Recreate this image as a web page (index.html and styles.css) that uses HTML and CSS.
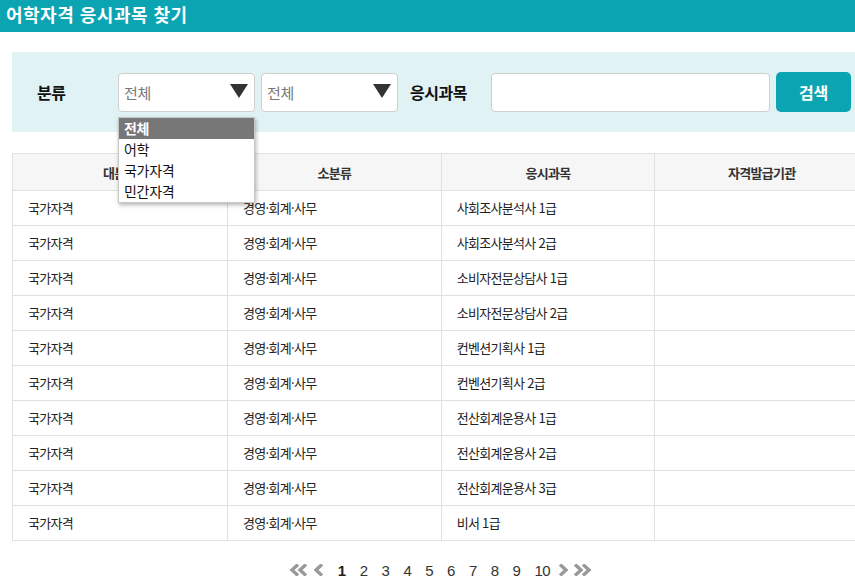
FILE: index.html
```html
<!DOCTYPE html>
<html lang="ko">
<head>
<meta charset="utf-8">
<title>어학자격 응시과목 찾기</title>
<link rel="stylesheet" href="styles.css">
</head>
<body>
<h1 class="title">어학자격 응시과목 찾기</h1>
<div class="content">
  <div class="search">
    <span class="label">분류</span>
    <div class="select-wrap">
      <div class="select"><span>전체</span><svg class="caret" width="18" height="14" viewBox="0 0 18 14"><path d="M0 0 H18 L9 14 Z" fill="#333"/></svg></div>
      <ul class="menu">
        <li class="on">전체</li>
        <li>어학</li>
        <li>국가자격</li>
        <li>민간자격</li>
      </ul>
    </div>
    <div class="select-wrap">
      <div class="select"><span>전체</span><svg class="caret" width="18" height="14" viewBox="0 0 18 14"><path d="M0 0 H18 L9 14 Z" fill="#333"/></svg></div>
    </div>
    <span class="label label2">응시과목</span>
    <div class="input"></div>
    <button class="btn">검색</button>
  </div>

  <table class="list">
    <colgroup><col class="c1"><col><col><col></colgroup>
    <thead>
      <tr><th>대분류</th><th>소분류</th><th>응시과목</th><th>자격발급기관</th></tr>
    </thead>
    <tbody>
      <tr><td>국가자격</td><td>경영·회계·사무</td><td>사회조사분석사 1급</td><td></td></tr>
      <tr><td>국가자격</td><td>경영·회계·사무</td><td>사회조사분석사 2급</td><td></td></tr>
      <tr><td>국가자격</td><td>경영·회계·사무</td><td>소비자전문상담사 1급</td><td></td></tr>
      <tr><td>국가자격</td><td>경영·회계·사무</td><td>소비자전문상담사 2급</td><td></td></tr>
      <tr><td>국가자격</td><td>경영·회계·사무</td><td>컨벤션기획사 1급</td><td></td></tr>
      <tr><td>국가자격</td><td>경영·회계·사무</td><td>컨벤션기획사 2급</td><td></td></tr>
      <tr><td>국가자격</td><td>경영·회계·사무</td><td>전산회계운용사 1급</td><td></td></tr>
      <tr><td>국가자격</td><td>경영·회계·사무</td><td>전산회계운용사 2급</td><td></td></tr>
      <tr><td>국가자격</td><td>경영·회계·사무</td><td>전산회계운용사 3급</td><td></td></tr>
      <tr><td>국가자격</td><td>경영·회계·사무</td><td>비서 1급</td><td></td></tr>
    </tbody>
  </table>

  <div class="paging">
    <svg class="arr dbl" width="20" height="12" viewBox="0 0 20 12"><path d="M9 0.5 L3 6 L9 11.5 M17 0.5 L11 6 L17 11.5" fill="none" stroke="#999" stroke-width="3.4"/></svg>
    <svg class="arr sgl" width="10" height="12" viewBox="0 0 10 12"><path d="M8 0.5 L2 6 L8 11.5" fill="none" stroke="#999" stroke-width="3.4"/></svg>
    <span class="pg cur">1</span>
    <span class="pg">2</span>
    <span class="pg">3</span>
    <span class="pg">4</span>
    <span class="pg">5</span>
    <span class="pg">6</span>
    <span class="pg">7</span>
    <span class="pg">8</span>
    <span class="pg">9</span>
    <span class="pg">10</span>
    <svg class="arr sgl-r" width="10" height="12" viewBox="0 0 10 12"><path d="M2 0.5 L8 6 L2 11.5" fill="none" stroke="#999" stroke-width="3.4"/></svg>
    <svg class="arr dbl-r" width="20" height="12" viewBox="0 0 20 12"><path d="M3 0.5 L9 6 L3 11.5 M11 0.5 L17 6 L11 11.5" fill="none" stroke="#999" stroke-width="3.4"/></svg>
  </div>
</div>
</body>
</html>
```

FILE: styles.css
```css
html, body {
  overflow-x: hidden;
}
body {
  margin: 0;
  font-family: "Noto Sans CJK KR", "Noto Sans", sans-serif;
  color: #333;
  background: #fff;
}
.title {
  margin: 0;
  height: 32px;
  line-height: 29px;
  padding-left: 6px;
  background: #0ba4b3;
  color: #fff;
  font-size: 18px;
  font-weight: 700;
  letter-spacing: 0.5px;
}
.content {
  margin: 20px 0 0 12px;
  width: 857px;
}
.search {
  display: flex;
  align-items: center;
  height: 80px;
  box-sizing: border-box;
  padding: 0 0 0 25px;
  background: #e1f2f5;
}
.label {
  width: 81px;
  font-size: 16px;
  font-weight: 700;
  color: #111;
  letter-spacing: -0.5px;
}
.label2 {
  margin-left: 6px;
}
.select-wrap {
  position: relative;
  margin-right: 6px;
}
.select {
  width: 137px;
  height: 39px;
  box-sizing: border-box;
  border: 1px solid #cfcfcf;
  border-radius: 4px;
  background: #fff;
  display: flex;
  align-items: center;
  justify-content: space-between;
  padding: 0 6px 0 5px;
  font-size: 15px;
  color: #777;
  letter-spacing: -0.3px;
}
.caret {
  margin-top: -2px;
}
.menu {
  position: absolute;
  top: 44px;
  left: 0;
  width: 137px;
  box-sizing: border-box;
  margin: 0;
  padding: 0;
  list-style: none;
  background: #fff;
  border: 1px solid #c8c8c8;
  box-shadow: 1px 2px 4px rgba(0,0,0,0.3);
  font-size: 14px;
  color: #111;
  z-index: 5;
}
.menu li {
  height: 21px;
  line-height: 21px;
  padding-left: 5px;
  letter-spacing: -0.3px;
}
.menu li.on {
  background: #777;
  color: #fff;
  font-weight: 700;
}
.input {
  width: 279px;
  height: 39px;
  box-sizing: border-box;
  border: 1px solid #cfcfcf;
  border-radius: 4px;
  background: #fff;
  margin-right: 6px;
}
.btn {
  width: 75px;
  height: 40px;
  border: 0;
  border-radius: 5px;
  background: #0ba4b3;
  color: #fff;
  font-family: inherit;
  font-size: 16px;
  font-weight: 700;
  letter-spacing: -0.3px;
  padding: 0;
}
.list {
  margin-top: 21px;
  width: 857px;
  border-collapse: collapse;
  table-layout: fixed;
  font-size: 13px;
  letter-spacing: -0.7px;
}
.list .c1 {
  width: 215px;
}
.list th, .list td {
  border: 1px solid #e0e0e0;
}
.list th {
  height: 36px;
  background: #f6f6f6;
  font-weight: 700;
  color: #333;
  text-align: center;
  padding: 0;
}
.list td {
  height: 32px;
  padding: 0 0 2px 15px;
  text-align: left;
  color: #222;
}
.paging {
  display: flex;
  justify-content: center;
  align-items: center;
  height: 24px;
  margin-top: 17px;
  font-family: "Liberation Sans", sans-serif;
  font-size: 15px;
  color: #333;
}
.pg {
  padding: 0 7px;
  letter-spacing: -0.5px;
}
.pg.cur {
  font-weight: 700;
  color: #222;
}
.arr.sgl {
  margin-left: 5px;
  margin-right: 7px;
}
.arr.sgl-r {
  margin-left: 1px;
  margin-right: 4px;
}
```
